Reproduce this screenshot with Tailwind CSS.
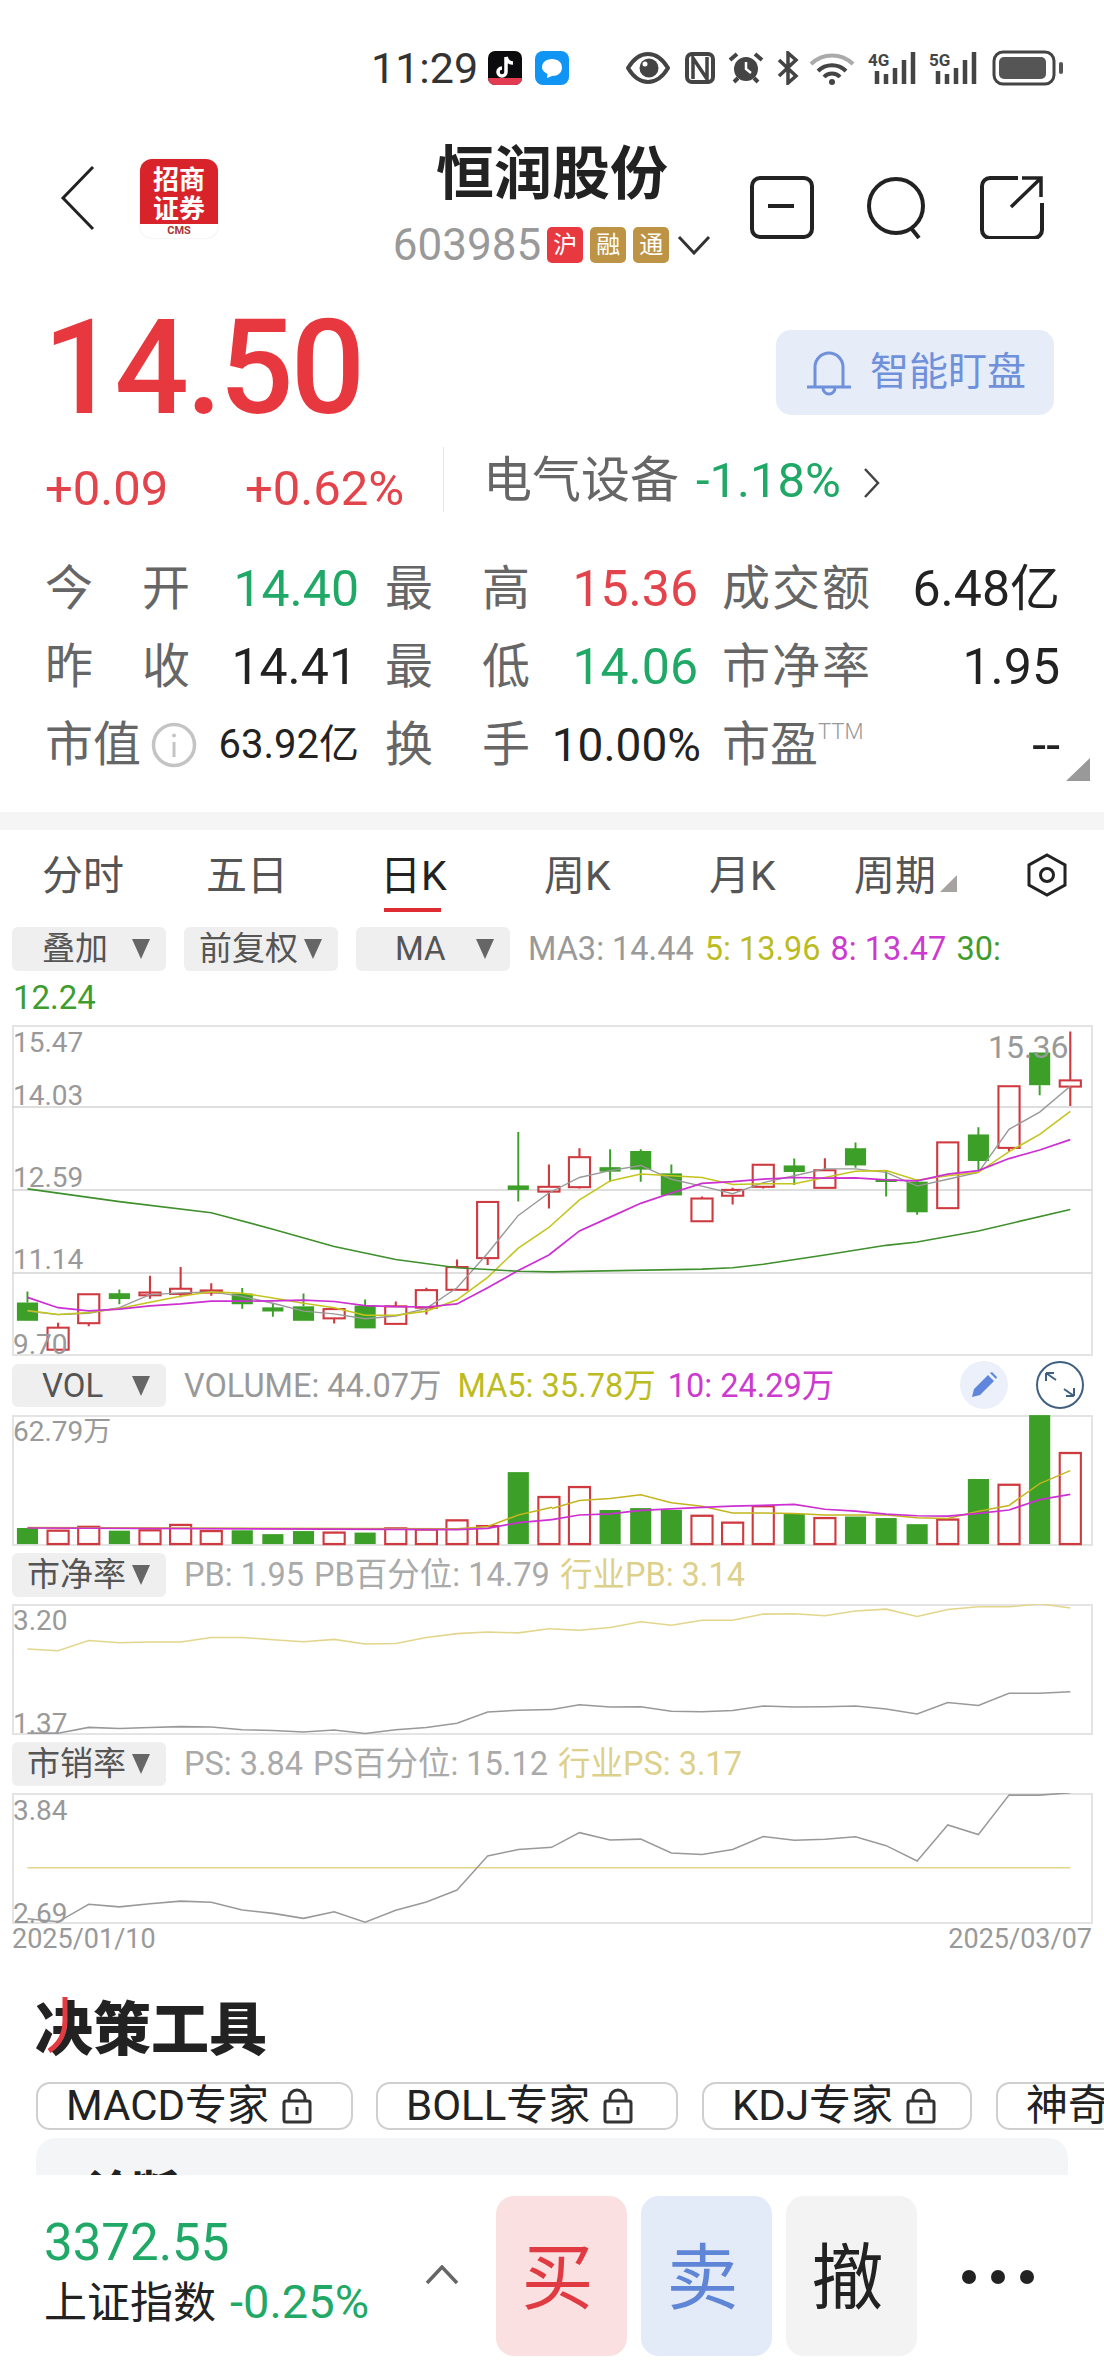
<!DOCTYPE html>
<html lang="zh-CN">
<head>
<meta charset="utf-8">
<title>恒润股份</title>
<script src="https://cdn.jsdelivr.net/npm/@tailwindcss/browser@4"></script>
</head>
<body class="bg-white">
<div class="w-[1104px] h-[2376px] overflow-hidden bg-white flex flex-col font-['Roboto','Noto_Sans_CJK_SC',sans-serif] text-[#222]">

  <!-- status bar -->
  <div class="h-[100px] shrink-0 flex items-start pt-[50px] pl-[371px]">
    <span class="text-[43px] leading-[36px] text-[#333] w-[117px]">11:29</span>
    <svg width="34" height="34" viewBox="0 0 34 34" class="mt-[1px]"><rect width="34" height="34" rx="7" fill="#0b0b0d"/><path d="M18 6v15a4 4 0 1 1-4-4M18 6c1 4 3 6 7 6" fill="none" stroke="#fff" stroke-width="3.5"/><path d="M0 27h34v0a7 7 0 0 1-7 7H7a7 7 0 0 1-7-7z" fill="#e33b52"/></svg>
    <svg width="34" height="34" viewBox="0 0 34 34" class="ml-[13px] mt-[1px]"><rect width="34" height="34" rx="8" fill="#1195f5"/><path d="M17 8c6 0 10 3.500 10 8.500s-4 8.500-10 8.500l-5 2 .5-4C9 21 7 19 7 16.500 7 11.500 11 8 17 8z" fill="#fff"/></svg>
    <svg width="44" height="32" viewBox="0 0 44 32" class="ml-[57px] mt-[2px]"><path d="M2 16C8 6 15 2 22 2s14 4 20 14c-6 10-13 14-20 14S8 26 2 16z" fill="none" stroke="#444" stroke-width="4"/><circle cx="23" cy="16" r="9.500" fill="#444"/><circle cx="19" cy="12" r="2.500" fill="#fff"/></svg>
    <svg width="30" height="32" viewBox="0 0 30 32" class="ml-[15px] mt-[2px]"><rect x="2" y="2" width="26" height="28" rx="5" fill="none" stroke="#444" stroke-width="4"/><path d="M8 27V6l14 21V5" fill="none" stroke="#444" stroke-width="3.500"/></svg>
    <svg width="38" height="34" viewBox="0 0 38 34" class="ml-[12px] mt-[1px]"><circle cx="19" cy="18" r="12" fill="#444"/><path d="M19 11v7l5 4" stroke="#fff" stroke-width="2.500" fill="none"/><path d="M3 9l7-6M35 9l-7-6M7 31l4-4M31 31l-4-4" stroke="#444" stroke-width="4"/></svg>
    <svg width="24" height="34" viewBox="0 0 24 34" class="ml-[11px] mt-[1px]"><path d="M3 9l17 16-8 7V2l8 7L3 25" fill="none" stroke="#444" stroke-width="3.500"/></svg>
    <svg width="46" height="34" viewBox="0 0 46 34" class="ml-[9px] mt-[1px]"><path d="M2 13a30 30 0 0 1 42 0" fill="none" stroke="#aaa" stroke-width="4"/><path d="M9 20a20 20 0 0 1 28 0M15 26a11 11 0 0 1 16 0" fill="none" stroke="#444" stroke-width="4"/><circle cx="23" cy="31" r="3" fill="#444"/></svg>
    <svg width="50" height="34" viewBox="0 0 50 34" class="ml-[13px] mt-[1px]"><text x="0" y="15" font-size="17" font-family="Roboto" font-weight="700" fill="#444">4G</text><path d="M9 20v13M18 23v10M27 17v16M36 9v24M45 1v32" stroke="#444" stroke-width="4.500"/></svg>
    <svg width="51" height="34" viewBox="0 0 51 34" class="ml-[11px] mt-[1px]"><text x="0" y="15" font-size="17" font-family="Roboto" font-weight="700" fill="#444">5G</text><path d="M9 20v13M18 23v10M27 17v16M36 9v24M45 1v32" stroke="#444" stroke-width="4.500"/></svg>
    <svg width="72" height="36" viewBox="0 0 72 36" class="ml-[12px]"><rect x="2" y="2" width="60" height="32" rx="9" fill="none" stroke="#444" stroke-width="3"/><rect x="7" y="7" width="47" height="22" rx="5" fill="#555"/><rect x="67" y="12" width="4" height="12" rx="2" fill="#555"/></svg>
  </div>

  <!-- header -->
  <div class="h-[180px] shrink-0 flex">
    <div class="w-[372px] flex items-start">
      <svg width="36" height="66" viewBox="0 0 36 66" class="ml-[60px] mt-[65px]" fill="none" stroke="#222" stroke-width="3"><path d="M33 2L3 33l30 31"/></svg>
      <div class="ml-[44px] mt-[59px] w-[78px] h-[79px] rounded-[12px] overflow-hidden flex flex-col bg-white shadow-[0_0_2px_#ddd]">
        <div class="h-[65px] bg-[#d8232a] text-white text-[26px] leading-[29px] font-bold text-center pt-[4px] font-['Noto_Sans_CJK_SC',sans-serif]">招商<br>证券</div>
        <div class="flex-1 text-[11px] leading-[14px] font-bold text-[#a33] text-center">CMS</div>
      </div>
    </div>
    <div class="w-[360px] flex flex-col items-center">
      <div class="mt-[39px] text-[58px] leading-[70px] font-bold text-[#222]">恒润股份</div>
      <div class="mt-[16px] flex items-center h-[40px]">
        <span class="text-[44px] leading-[40px] text-[#999] mr-[6px]">603985</span>
        <span class="w-[36px] h-[36px] rounded-[5px] bg-[#e7393f] text-white text-[24px] leading-[36px] text-center">沪</span>
        <span class="ml-[7px] w-[36px] h-[36px] rounded-[5px] bg-[#bd9445] text-white text-[24px] leading-[36px] text-center">融</span>
        <span class="ml-[7px] w-[36px] h-[36px] rounded-[5px] bg-[#bd9445] text-white text-[24px] leading-[36px] text-center">通</span>
        <svg width="34" height="20" viewBox="0 0 34 20" fill="none" stroke="#333" stroke-width="3" class="ml-[8px]"><path d="M2 2l15 16L32 2"/></svg>
      </div>
    </div>
    <div class="flex items-start pt-[75px] pl-[18px]">
      <svg width="64" height="64" viewBox="0 0 64 64" fill="none" stroke="#222" stroke-width="4"><rect x="2" y="3" width="60" height="59" rx="8"/><path d="M18 31h26" stroke-width="4"/></svg>
      <svg width="62" height="64" viewBox="0 0 62 64" fill="none" stroke="#222" stroke-width="4" class="ml-[52px]"><circle cx="30" cy="31" r="27"/><path d="M45 53l8 10"/></svg>
      <svg width="64" height="64" viewBox="0 0 64 64" fill="none" stroke="#222" stroke-width="4" class="ml-[52px]"><path d="M38 3H10a8 8 0 0 0-8 8v44a8 8 0 0 0 8 8h44a8 8 0 0 0 8-8V28"/><path d="M31 32L60 4M42 3h19v19" stroke-width="3.500"/></svg>
    </div>
  </div>

  <!-- price -->
  <div class="h-[160px] shrink-0 flex items-start justify-between pl-[43px] pr-[50px]">
    <div class="text-[131px] leading-[160px] text-[#e8383f] tracking-[-3px] font-medium mt-[8px]">14.50</div>
    <div class="mt-[50px] w-[278px] h-[85px] rounded-[15px] bg-[#e6ecf8] flex items-center pl-[29px] text-[39px] text-[#6f90da]">
      <svg width="48" height="50" viewBox="0 0 48 50" fill="none" stroke="#6f90da" stroke-width="3"><path d="M10 38V19a14 14 0 0 1 28 0v19M2 39h44M18 40a6 6 0 0 0 12 0"/></svg>
      <span class="ml-[17px]">智能盯盘</span>
    </div>
  </div>

  <!-- change row -->
  <div class="h-[100px] shrink-0 flex items-start relative">
    <span class="ml-[45px] mt-[22px] text-[49px] leading-[54px] text-[#e3434a] w-[200px]">+0.09</span>
    <span class="mt-[22px] text-[49px] leading-[54px] text-[#e3434a] w-[198px]">+0.62%</span>
    <span class="mt-[7px] w-px h-[65px] bg-[#e6e6e6]"></span>
    <span class="ml-[39px] mt-[10px] text-[49px] leading-[62px] text-[#666]">电气设备</span>
    <span class="ml-[17px] mt-[14px] text-[49px] leading-[54px] text-[#1fa866]">-1.18%</span>
    <svg width="18" height="32" viewBox="0 0 18 32" fill="none" stroke="#444" stroke-width="2.500" class="ml-[22px] mt-[27px]"><path d="M2 2l13 14L2 30"/></svg>
  </div>

  <!-- quotes -->
  <div class="h-[272px] shrink-0 relative pl-[45px] pt-[10px] flex flex-col">
    <div class="h-[78px] flex items-center text-[48px] leading-[60px]">
      <span class="w-[145px] flex justify-between text-[#666]"><span>今</span><span>开</span></span>
      <span class="w-[169px] text-right text-[50px] text-[#1fa866]">14.40</span>
      <span class="ml-[26px] w-[145px] flex justify-between text-[#666]"><span>最</span><span>高</span></span>
      <span class="w-[168px] text-right text-[50px] text-[#e3434a]">15.36</span>
      <span class="ml-[24px] w-[148px] text-[#666] whitespace-nowrap tracking-[2px]">成交额</span>
      <span class="w-[190px] text-right text-[50px] text-[#222] whitespace-nowrap">6.48亿</span>
    </div>
    <div class="h-[78px] flex items-center text-[48px] leading-[60px]">
      <span class="w-[145px] flex justify-between text-[#666]"><span>昨</span><span>收</span></span>
      <span class="w-[169px] text-right text-[50px] text-[#222] pr-[2px]">14.41</span>
      <span class="ml-[26px] w-[145px] flex justify-between text-[#666]"><span>最</span><span>低</span></span>
      <span class="w-[168px] text-right text-[50px] text-[#1fa866]">14.06</span>
      <span class="ml-[24px] w-[148px] text-[#666] whitespace-nowrap tracking-[2px]">市净率</span>
      <span class="w-[190px] text-right text-[50px] text-[#222]">1.95</span>
    </div>
    <div class="h-[78px] flex items-center text-[48px] leading-[60px]">
      <span class="w-[96px] text-[#666] whitespace-nowrap">市值</span>
      <svg width="46" height="46" viewBox="0 0 46 46" fill="none" class="ml-[10px] shrink-0"><circle cx="23" cy="23" r="20.500" stroke="#c4c4c4" stroke-width="3.500"/><circle cx="23" cy="13.500" r="2" fill="#c4c4c4"/><path d="M23 20v15" stroke="#c4c4c4" stroke-width="3"/></svg>
      <span class="w-[162px] text-right text-[40px] text-[#222] whitespace-nowrap">63.92亿</span>
      <span class="ml-[26px] w-[145px] flex justify-between text-[#666]"><span>换</span><span>手</span></span>
      <span class="w-[171px] text-right text-[46px] text-[#222] whitespace-nowrap">10.00%</span>
      <span class="ml-[21px] w-[140px] flex items-start text-[#666] whitespace-nowrap"><span>市盈</span><span class="text-[22px] leading-[34px] text-[#999] font-light">TTM</span></span>
      <span class="w-[198px] text-right text-[50px] text-[#222]">--</span>
    </div>
    <svg width="26" height="24" viewBox="0 0 26 24" class="absolute left-[1065px] top-[218px]"><path d="M25 0v23H1z" fill="#999"/></svg>
  </div>

  <!-- divider band -->
  <div class="h-[18px] shrink-0 bg-[#f5f5f5]"></div>

  <!-- tabs -->
  <div class="h-[88px] shrink-0 relative text-[41px] leading-[50px] text-[#555]">
    <span class="absolute left-[42px] top-[21px]">分时</span>
    <span class="absolute left-[206px] top-[21px]">五日</span>
    <span class="absolute left-[380px] top-[21px] text-[#222]">日K</span>
    <span class="absolute left-[384px] top-[78px] w-[57px] h-[4px] bg-[#df2c32]"></span>
    <span class="absolute left-[544px] top-[21px]">周K</span>
    <span class="absolute left-[709px] top-[21px]">月K</span>
    <span class="absolute left-[854px] top-[21px]">周期</span>
    <svg width="18" height="18" viewBox="0 0 18 18" class="absolute left-[940px] top-[45px]"><path d="M17 0v17H0z" fill="#a7a3a3"/></svg>
    <svg width="42" height="44" viewBox="0 0 42 44" fill="none" stroke="#222" stroke-width="3" class="absolute left-[1026px] top-[23px]"><path d="M21 2l18 10v20L21 42 3 32V12z"/><circle cx="21" cy="22" r="6.500"/></svg>
  </div>

  <!-- MA row -->
  <div class="h-[62px] shrink-0 flex items-center pl-[12px] text-[32.5px] leading-[44px] whitespace-nowrap">
    <div class="w-[154px] h-[44px] rounded-[6px] bg-[#efefef] flex items-center justify-between pl-[30px] pr-[15px] text-[33px] text-[#555]">叠加<svg width="20" height="22" viewBox="0 0 20 22"><path d="M1 1h18L10 21z" fill="#666"/></svg></div>
    <div class="ml-[18px] w-[154px] h-[44px] rounded-[6px] bg-[#efefef] flex items-center justify-between pl-[15px] pr-[15px] text-[33px] text-[#555]">前复权<svg width="20" height="22" viewBox="0 0 20 22"><path d="M1 1h18L10 21z" fill="#666"/></svg></div>
    <div class="ml-[18px] w-[154px] h-[44px] rounded-[6px] bg-[#efefef] flex items-center justify-between pl-[39px] pr-[15px] text-[33px] text-[#555]">MA<svg width="20" height="22" viewBox="0 0 20 22"><path d="M1 1h18L10 21z" fill="#666"/></svg></div>
    <span class="ml-[18px] text-[#999]">MA3: 14.44</span>
    <span class="ml-[11px] text-[#bcbc1e]">5: 13.96</span>
    <span class="ml-[10px] text-[#cc3ad0]">8: 13.47</span>
    <span class="ml-[10px] text-[#3f9c2e]">30:</span>
  </div>
  <div class="h-[45px] shrink-0 pl-[13px] text-[33px] leading-[36px] text-[#3f9c2e]">12.24</div>

  <!-- main chart -->
  <div class="mx-[12px] w-[1081px] h-[331px] shrink-0 relative border-2 border-[#e4e4e4] text-[28px] leading-[28px] text-[#999]">
    <svg width="1081" height="331" viewBox="12 1025 1081 331" class="absolute left-[-2px] top-[-2px] overflow-visible" fill="none">
      <path d="M12 1107H1092M12 1190H1092M12 1273H1092" stroke="#d4d4d4" stroke-width="1.500"/>
      <g transform="translate(0 840) scale(.3521 .3444)">
        <g fill="#3c9f27">
          <rect x="48" y="1343" width="60" height="53"/><rect x="309" y="1316" width="60" height="17"/><rect x="658" y="1317" width="60" height="31"/><rect x="745" y="1357" width="60" height="12"/><rect x="832" y="1354" width="60" height="42"/><rect x="1007" y="1352" width="60" height="66"/><rect x="1442" y="1003" width="60" height="13"/>
        </g>
        <path stroke="#3c9f27" stroke-width="5.500" d="M78 1311V1343M339 1305V1348M688 1301V1361M775 1345V1384M862 1317V1354M1037 1334V1352M1472 848V1050"/>
        <g stroke="#cf3a40" stroke-width="6">
          <rect x="135" y="1416" width="60" height="64"/><rect x="222" y="1319" width="60" height="84"/><rect x="396" y="1314" width="60" height="8"/><rect x="483" y="1303" width="60" height="15"/><rect x="570" y="1308" width="60" height="6"/><rect x="919" y="1362" width="60" height="27"/><rect x="1094" y="1354" width="60" height="51"/><rect x="1181" y="1307" width="60" height="51"/><rect x="1268" y="1240" width="60" height="66"/><rect x="1355" y="1051" width="60" height="163"/><rect x="1529" y="1007" width="60" height="14"/>
          <path d="M165 1402V1416M252 1403V1412M426 1265V1332M513 1240V1303M513 1318V1328M600 1287V1323M949 1389V1404M1124 1340V1354M1211 1300V1307M1211 1358V1378M1298 1218V1240M1385 1214V1234M1559 942V1007M1559 1021V1070"/>
        </g>
        <polyline stroke="#999" stroke-width="4" points="78,1368 165,1378 252,1374 339,1358 426,1320 513,1315 600,1312 688,1325 775,1345 862,1368 949,1376 1037,1390 1124,1382 1211,1360 1298,1300 1385,1200 1472,1090 1559,1025"/>
        <polyline stroke="#c4c41e" stroke-width="4.500" points="78,1366 165,1378 252,1372 339,1360 426,1342 513,1325 600,1312 688,1316 775,1330 862,1345 949,1358 1037,1380 1124,1380 1211,1368 1298,1335 1385,1270 1472,1185 1559,1125"/>
        <polyline stroke="#cc2fd2" stroke-width="5" points="78,1328 165,1358 252,1367 339,1362 426,1353 513,1347 600,1339 688,1339 775,1338 862,1336 949,1340 1037,1352 1124,1355 1211,1356 1298,1347 1385,1300 1472,1250 1559,1205"/>
        <polyline stroke="#3f8f2c" stroke-width="4.500" points="78,1013 339,1050 600,1082 775,1130 949,1180 1124,1218 1298,1242 1472,1252 1568,1254"/>
      </g>
      <g transform="translate(552 840) scale(.3521 .3444)">
        <g fill="#3c9f27">
          <rect x="135" y="950" width="60" height="13"/><rect x="222" y="903" width="60" height="54"/><rect x="309" y="968" width="60" height="64"/><rect x="658" y="945" width="60" height="19"/><rect x="832" y="895" width="60" height="50"/><rect x="919" y="985" width="60" height="8"/><rect x="1007" y="992" width="60" height="89"/><rect x="1181" y="855" width="60" height="77"/><rect x="1355" y="617" width="60" height="95"/>
        </g>
        <path stroke="#3c9f27" stroke-width="5.500" d="M165 898V992M252 898V992M339 942V968M688 925V1002M862 878V952M949 958V1035M1037 985V1088M1211 834V960M1385 712V741"/>
        <g stroke="#cf3a40" stroke-width="6">
          <rect x="48" y="921" width="60" height="87"/><rect x="396" y="1041" width="60" height="66"/><rect x="483" y="1016" width="60" height="17"/><rect x="570" y="943" width="60" height="64"/><rect x="745" y="959" width="60" height="51"/><rect x="1094" y="878" width="60" height="191"/><rect x="1268" y="715" width="60" height="179"/><rect x="1442" y="698" width="60" height="18"/>
          <path d="M78 895V921M78 1008V1012M426 1035V1041M513 1010V1016M513 1033V1058M600 1007V1012M775 924V959M1298 894V905M1472 556V698M1472 716V772"/>
        </g>
        <polyline stroke="#999" stroke-width="4" points="-9,1025 78,980 165,960 252,945 339,985 426,1005 513,1027 600,995 688,975 775,955 862,955 949,965 1037,1005 1124,985 1211,965 1298,840 1385,790 1472,715"/>
        <polyline stroke="#c4c41e" stroke-width="4.500" points="-9,1125 78,1045 165,990 252,970 339,975 426,980 513,1000 600,998 688,998 775,980 862,962 949,960 1037,988 1124,975 1211,965 1298,905 1385,855 1472,788"/>
        <polyline stroke="#cc2fd2" stroke-width="5" points="-9,1205 78,1135 165,1095 252,1055 339,1025 426,997 513,992 600,985 688,980 775,982 862,981 949,987 1037,990 1124,970 1211,960 1298,925 1385,900 1472,870"/>
        <polyline stroke="#3f8f2c" stroke-width="4.500" points="0,1254 426,1246 513,1242 600,1232 775,1205 949,1177 1037,1167 1211,1135 1472,1073"/>
      </g>
    </svg>
    <span class="absolute left-[-1px] top-[2px]">15.47</span>
    <span class="absolute left-[-1px] top-[55px]">14.03</span>
    <span class="absolute left-[-1px] top-[137px]">12.59</span>
    <span class="absolute left-[-1px] top-[219px]">11.14</span>
    <span class="absolute left-[-1px] top-[304px]">9.70</span>
    <span class="absolute left-[974px] top-[6px] text-[32px]">15.36</span>
  </div>

  <!-- VOL row -->
  <div class="h-[59px] shrink-0 flex items-center pl-[12px] text-[32.5px] leading-[44px] whitespace-nowrap relative">
    <div class="w-[154px] h-[43px] rounded-[6px] bg-[#efefef] flex items-center justify-between pl-[30px] pr-[15px] text-[33px] text-[#555]">VOL<svg width="20" height="22" viewBox="0 0 20 22"><path d="M1 1h18L10 21z" fill="#666"/></svg></div>
    <span class="ml-[18px] text-[#999]">VOLUME: 44.07万</span>
    <span class="ml-[16px] text-[#bcbc1e]">MA5: 35.78万</span>
    <span class="ml-[12px] text-[#cc3ad0]">10: 24.29万</span>
    <div class="absolute left-[960px] top-[5px] w-[48px] h-[48px] rounded-full bg-[#ebf0fa] flex items-center justify-center"><svg width="30" height="30" viewBox="0 0 30 30"><path d="M3 27l2-8L19 5l6 6-14 14zM21 3l2-1 5 5-1 2z" fill="#5f86dc"/></svg></div>
    <svg width="50" height="50" viewBox="0 0 50 50" fill="none" stroke="#3f6080" stroke-width="2" class="absolute left-[1035px] top-[4px]"><circle cx="25" cy="25" r="23"/><path d="M11 13l10 7M11 13v8M11 13h8M39 36l-10-7M39 36v-8M39 36h-8"/></svg>
  </div>

  <!-- VOL chart -->
  <div class="mx-[12px] w-[1081px] h-[131px] shrink-0 relative border-2 border-[#e4e4e4] text-[28px] leading-[28px] text-[#999]">
    <svg width="1081" height="131" viewBox="12 1415 1081 131" class="absolute left-[-2px] top-[-2px] overflow-hidden" fill="none">
      <g transform="translate(0 1360) scale(.3521 .3827)">
        <g fill="#3c9f27">
          <rect x="48" y="439" width="60" height="42"/><rect x="309" y="446" width="60" height="35"/><rect x="658" y="445" width="60" height="36"/><rect x="745" y="455" width="60" height="26"/><rect x="832" y="447" width="60" height="34"/><rect x="1007" y="451" width="60" height="30"/><rect x="1442" y="293" width="60" height="188"/>
        </g>
        <g stroke="#cf3a40" stroke-width="6">
          <rect x="135" y="446" width="60" height="35"/><rect x="222" y="436" width="60" height="45"/><rect x="396" y="445" width="60" height="36"/><rect x="483" y="431" width="60" height="50"/><rect x="570" y="447" width="60" height="34"/><rect x="919" y="451" width="60" height="30"/><rect x="1094" y="440" width="60" height="41"/><rect x="1181" y="443" width="60" height="38"/><rect x="1268" y="419" width="60" height="62"/><rect x="1355" y="434" width="60" height="47"/><rect x="1529" y="358" width="60" height="123"/>
        </g>
        <polyline stroke="#c4b41e" stroke-width="4" points="78,438 1298,441 1385,435 1472,405 1568,385"/>
        <polyline stroke="#cc2fd2" stroke-width="4.500" points="78,439 1298,443 1385,440 1472,425 1568,417"/>
      </g>
      <g transform="translate(552 1360) scale(.3521 .3827)">
        <g fill="#3c9f27">
          <rect x="135" y="392" width="60" height="89"/><rect x="222" y="387" width="60" height="94"/><rect x="309" y="392" width="60" height="89"/><rect x="658" y="402" width="60" height="79"/><rect x="832" y="409" width="60" height="72"/><rect x="919" y="413" width="60" height="68"/><rect x="1007" y="429" width="60" height="52"/><rect x="1181" y="311" width="60" height="170"/><rect x="1355" y="144" width="60" height="337"/>
        </g>
        <g stroke="#cf3a40" stroke-width="6">
          <rect x="48" y="332" width="60" height="149"/><rect x="396" y="407" width="60" height="74"/><rect x="483" y="425" width="60" height="56"/><rect x="570" y="382" width="60" height="99"/><rect x="745" y="413" width="60" height="68"/><rect x="1094" y="417" width="60" height="64"/><rect x="1268" y="326" width="60" height="155"/><rect x="1442" y="243" width="60" height="238"/>
        </g>
        <polyline stroke="#c4b41e" stroke-width="4" points="0,388 78,367 165,362 252,352 339,373 426,382 513,400 600,400 688,401 775,405 862,405 949,405 1037,412 1124,414 1211,395 1298,380 1385,323 1472,289"/>
        <polyline stroke="#cc2fd2" stroke-width="4.500" points="0,417 78,405 165,402 252,393 339,389 426,385 513,382 600,380 688,377 775,390 862,395 949,403 1037,407 1124,408 1211,401 1298,392 1385,365 1472,351"/>
      </g>
    </svg>
    <span class="absolute left-[-1px] top-[1px]">62.79万</span>
  </div>

  <!-- PB row -->
  <div class="h-[58px] shrink-0 flex items-center pl-[12px] text-[32.5px] leading-[44px] whitespace-nowrap">
    <div class="w-[154px] h-[44px] rounded-[6px] bg-[#efefef] flex items-center justify-between pl-[15px] pr-[15px] text-[33px] text-[#555]">市净率<svg width="20" height="22" viewBox="0 0 20 22"><path d="M1 1h18L10 21z" fill="#666"/></svg></div>
    <span class="ml-[18px] text-[#aaa]">PB: 1.95</span>
    <span class="ml-[10px] text-[#aaa]">PB百分位: 14.79</span>
    <span class="ml-[10px] text-[#ddd08a]">行业PB: 3.14</span>
  </div>

  <!-- PB chart -->
  <div class="mx-[12px] w-[1081px] h-[131px] shrink-0 relative border-2 border-[#e4e4e4] text-[28px] leading-[28px] text-[#999]">
    <svg width="1081" height="131" viewBox="12 1604 1081 131" class="absolute left-[-2px] top-[-2px]" fill="none">
      <g transform="translate(0 1360) scale(.3521 .3827)" stroke-width="4">
        <polyline stroke="#e2d68c" points="78,755 165,760 252,733 339,739 426,737 513,737 600,725 688,725 775,731 862,736 949,730 1037,742 1124,741 1211,725 1298,715 1385,711 1472,713 1559,702"/>
        <polyline stroke="#999" points="78,975 165,975 252,960 339,963 426,960 513,958 600,959 688,966 775,968 862,972 949,967 1037,976 1124,966 1211,960 1298,949 1385,920 1472,915 1568,913"/>
      </g>
      <g transform="translate(552 1360) scale(.3521 .3827)" stroke-width="4">
        <polyline stroke="#e2d68c" points="-9,702 78,706 165,699 252,684 339,693 426,680 513,680 600,664 688,663 775,668 862,656 949,651 1037,670 1124,652 1211,645 1298,645 1385,637 1472,648"/>
        <polyline stroke="#999" points="0,913 78,901 165,907 252,906 339,918 426,919 513,916 600,904 688,907 775,906 862,904 949,912 1037,925 1124,895 1211,903 1298,871 1385,871 1472,867"/>
      </g>
    </svg>
    <span class="absolute left-[-1px] top-[1px]">3.20</span>
    <span class="absolute left-[-1px] top-[104px]">1.37</span>
  </div>

  <!-- PS row -->
  <div class="h-[58px] shrink-0 flex items-center pl-[12px] text-[32.5px] leading-[44px] whitespace-nowrap">
    <div class="w-[154px] h-[44px] rounded-[6px] bg-[#efefef] flex items-center justify-between pl-[15px] pr-[15px] text-[33px] text-[#555]">市销率<svg width="20" height="22" viewBox="0 0 20 22"><path d="M1 1h18L10 21z" fill="#666"/></svg></div>
    <span class="ml-[18px] text-[#aaa]">PS: 3.84</span>
    <span class="ml-[10px] text-[#aaa]">PS百分位: 15.12</span>
    <span class="ml-[10px] text-[#ddd08a]">行业PS: 3.17</span>
  </div>

  <!-- PS chart -->
  <div class="mx-[12px] w-[1081px] h-[131px] shrink-0 relative border-2 border-[#e4e4e4] text-[28px] leading-[28px] text-[#999]">
    <svg width="1081" height="131" viewBox="12 1793 1081 131" class="absolute left-[-2px] top-[-2px]" fill="none">
      <g transform="translate(0 1360) scale(.3521 .3827)" stroke-width="4">
        <path stroke="#e2d68c" d="M78 1327H1568"/>
        <polyline stroke="#999" points="78,1460 165,1468 252,1422 339,1429 426,1421 513,1414 600,1417 688,1437 775,1446 862,1459 949,1442 1037,1469 1124,1438 1211,1416 1298,1385 1385,1296 1472,1279 1568,1273"/>
      </g>
      <g transform="translate(552 1360) scale(.3521 .3827)" stroke-width="4">
        <path stroke="#e2d68c" d="M0 1327H1472"/>
        <polyline stroke="#999" points="0,1273 78,1235 165,1254 252,1252 339,1288 426,1292 513,1279 600,1245 688,1255 775,1252 862,1246 949,1269 1037,1309 1124,1215 1211,1240 1298,1137 1385,1137 1472,1131"/>
      </g>
    </svg>
    <span class="absolute left-[-1px] top-[2px]">3.84</span>
    <span class="absolute left-[-1px] top-[105px]">2.69</span>
  </div>

  <!-- dates -->
  <div class="h-[30px] shrink-0 flex justify-between pl-[12px] pr-[12px] text-[27px] leading-[30px] text-[#999]">
    <span>2025/01/10</span><span>2025/03/07</span>
  </div>

  <!-- tools -->
  <div class="relative h-[221px] shrink-0 overflow-hidden">
    <div class="ml-[35px] mt-[40px] h-[62px] text-[58px] leading-[62px] font-black text-[#222] font-['Noto_Sans_CJK_SC',sans-serif] relative w-[240px]">决策工具
      <svg width="24" height="56" viewBox="0 0 24 56" fill="none" stroke="#e33b42" stroke-width="5" class="absolute left-[11px] top-[3px]"><path d="M19 0v24C19 38 12 48 3 54"/></svg>
    </div>
    <div class="mt-[26px] flex items-center pl-[36px] text-[42px] leading-[46px] text-[#222] whitespace-nowrap">
      <div class="w-[317px] h-[48px] shrink-0 rounded-[14px] border-2 border-[#cfcfcf] flex items-center pl-[28px]">MACD专家<svg width="30" height="36" viewBox="0 0 30 36" fill="none" stroke="#333" stroke-width="3" class="ml-[13px]"><rect x="2" y="13" width="26" height="21" rx="2"/><path d="M7 13V10a8 8 0 0 1 16 0v3M15 19v8"/></svg></div>
      <div class="ml-[23px] w-[302px] h-[48px] shrink-0 rounded-[14px] border-2 border-[#cfcfcf] flex items-center pl-[28px]">BOLL专家<svg width="30" height="36" viewBox="0 0 30 36" fill="none" stroke="#333" stroke-width="3" class="ml-[13px]"><rect x="2" y="13" width="26" height="21" rx="2"/><path d="M7 13V10a8 8 0 0 1 16 0v3M15 19v8"/></svg></div>
      <div class="ml-[24px] w-[270px] h-[48px] shrink-0 rounded-[14px] border-2 border-[#cfcfcf] flex items-center pl-[28px]">KDJ专家<svg width="30" height="36" viewBox="0 0 30 36" fill="none" stroke="#333" stroke-width="3" class="ml-[13px]"><rect x="2" y="13" width="26" height="21" rx="2"/><path d="M7 13V10a8 8 0 0 1 16 0v3M15 19v8"/></svg></div>
      <div class="ml-[24px] w-[200px] h-[48px] shrink-0 rounded-[14px] border-2 border-[#cfcfcf] flex items-center pl-[28px]">神奇九转</div>
    </div>
    <div class="mt-[8px] mx-[36px] h-[60px] rounded-t-[20px] bg-[#f4f5f6] pl-[50px] pt-[26px] text-[46px] leading-[50px] font-black text-[#222] font-['Noto_Sans_CJK_SC',sans-serif]">诊断</div>
  </div>

  <!-- bottom bar -->
  <div class="flex-1 relative bg-white flex items-start">
    <div class="pl-[44px] pt-[43px] w-[400px] whitespace-nowrap">
      <div class="text-[51px] leading-[50px] text-[#1fa866]">3372.55</div>
      <div class="mt-[9px] text-[43px] leading-[50px] text-[#222]">上证指数<span class="ml-[14px] text-[#1fa866] text-[47px]">-0.25%</span></div>
    </div>
    <svg width="34" height="20" viewBox="0 0 34 20" fill="none" stroke="#666" stroke-width="3.500" class="mt-[90px] ml-[25px]"><path d="M2 18L17 2l15 16"/></svg>
    <div class="ml-[37px] mt-[21px] w-[131px] h-[160px] rounded-[18px] bg-[#fbe0e2] flex items-center justify-center pr-[8px] pt-[6px] text-[72px] leading-none text-[#e03b42]">买</div>
    <div class="ml-[14px] mt-[21px] w-[131px] h-[160px] rounded-[18px] bg-[#e4ebf8] flex items-center justify-center pr-[8px] pt-[6px] text-[72px] leading-none text-[#5f86d6]">卖</div>
    <div class="ml-[14px] mt-[21px] w-[131px] h-[160px] rounded-[18px] bg-[#f3f3f3] flex items-center justify-center pr-[8px] pt-[6px] text-[72px] leading-none text-[#222]">撤</div>
    <svg width="74" height="16" viewBox="0 0 74 16" class="ml-[44px] mt-[94px]" fill="#222"><circle cx="8" cy="8" r="7"/><circle cx="37" cy="8" r="7"/><circle cx="66" cy="8" r="7"/></svg>
  </div>

</div>
</body>
</html>
